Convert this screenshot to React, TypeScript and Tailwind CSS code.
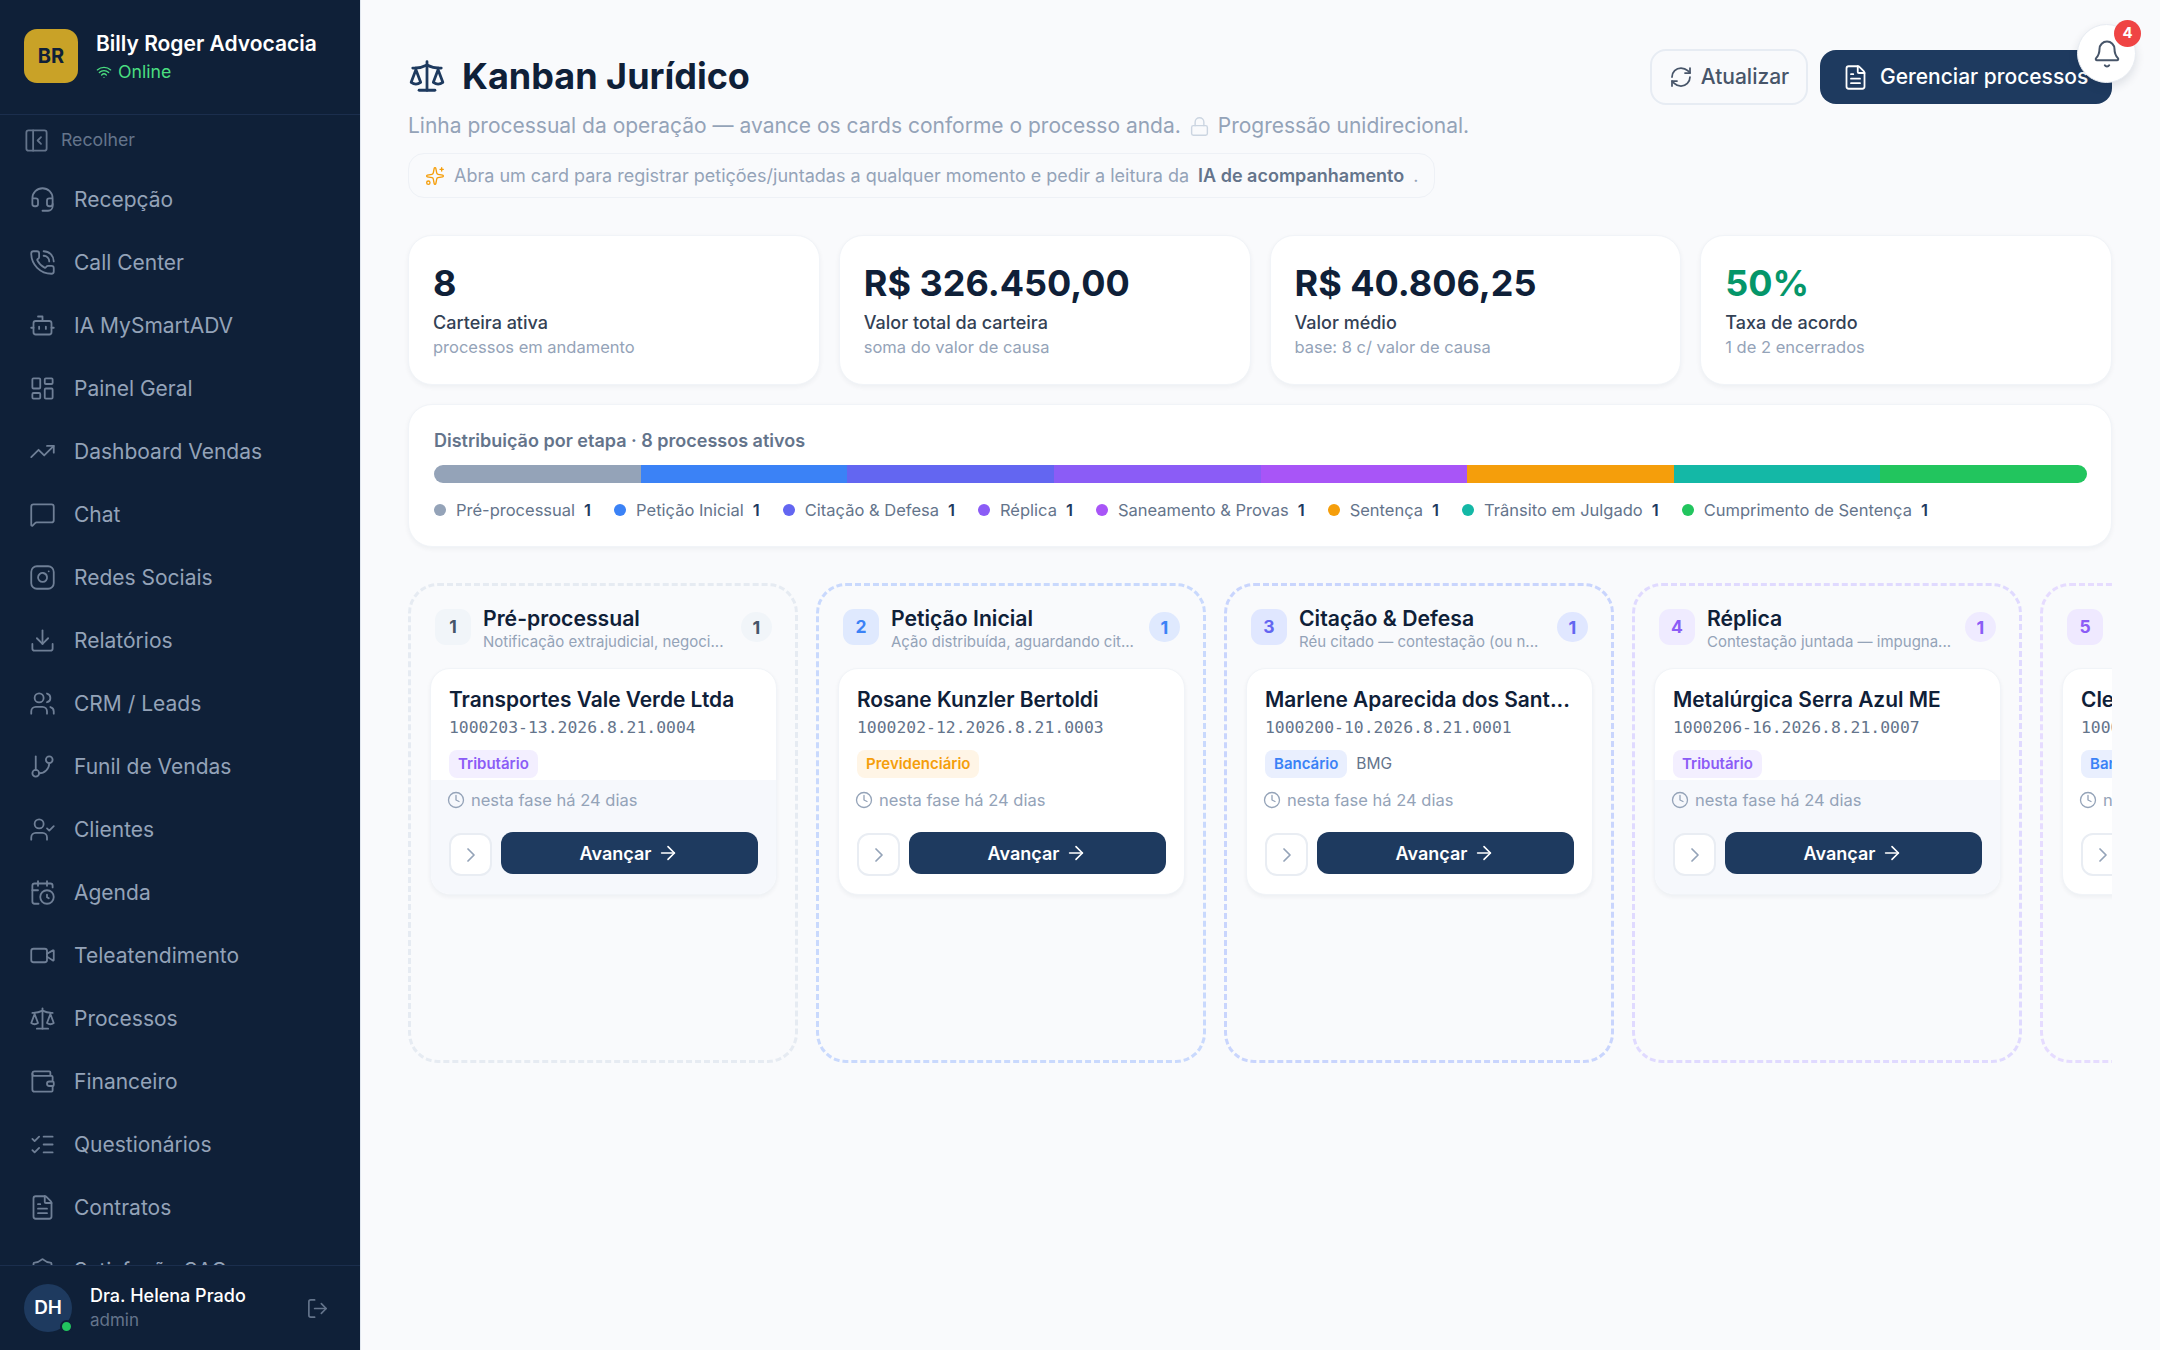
import {
  ArrowRight,
  Bell,
  Bot,
  CalendarClock,
  ChevronRight,
  Clock,
  Download,
  FileText,
  GitBranch,
  Headset,
  Instagram,
  LayoutDashboard,
  ListChecks,
  Lock,
  LogOut,
  MessageSquare,
  PanelLeftClose,
  PhoneCall,
  RefreshCw,
  Scale,
  ShieldCheck,
  Sparkles,
  TrendingUp,
  UserCheck,
  Users,
  Video,
  Wallet,
  Wifi,
} from "lucide-react";

const navItems = [
  { label: "Recepção", icon: Headset },
  { label: "Call Center", icon: PhoneCall },
  { label: "IA MySmartADV", icon: Bot },
  { label: "Painel Geral", icon: LayoutDashboard },
  { label: "Dashboard Vendas", icon: TrendingUp },
  { label: "Chat", icon: MessageSquare },
  { label: "Redes Sociais", icon: Instagram },
  { label: "Relatórios", icon: Download },
  { label: "CRM / Leads", icon: Users },
  { label: "Funil de Vendas", icon: GitBranch },
  { label: "Clientes", icon: UserCheck },
  { label: "Agenda", icon: CalendarClock },
  { label: "Teleatendimento", icon: Video },
  { label: "Processos", icon: Scale },
  { label: "Financeiro", icon: Wallet },
  { label: "Questionários", icon: ListChecks },
  { label: "Contratos", icon: FileText },
  { label: "Satisfação SAC", icon: ShieldCheck },
];

const stats = [
  { value: "8", label: "Carteira ativa", sub: "processos em andamento", color: "text-[#0f2038]" },
  { value: "R$ 326.450,00", label: "Valor total da carteira", sub: "soma do valor de causa", color: "text-[#0f2038]" },
  { value: "R$ 40.806,25", label: "Valor médio", sub: "base: 8 c/ valor de causa", color: "text-[#0f2038]" },
  { value: "50%", label: "Taxa de acordo", sub: "1 de 2 encerrados", color: "text-[#059669]" },
];

const stages = [
  { label: "Pré-processual", dot: "bg-[#94a3b8]" },
  { label: "Petição Inicial", dot: "bg-[#3b82f6]" },
  { label: "Citação & Defesa", dot: "bg-[#6366f1]" },
  { label: "Réplica", dot: "bg-[#8b5cf6]" },
  { label: "Saneamento & Provas", dot: "bg-[#a855f7]" },
  { label: "Sentença", dot: "bg-[#f59e0b]" },
  { label: "Trânsito em Julgado", dot: "bg-[#14b8a6]" },
  { label: "Cumprimento de Sentença", dot: "bg-[#22c55e]" },
];

const tagStyles = {
  tributario: "bg-[#f3efff] text-[#8b5cf6]",
  previdenciario: "bg-[#fff5e6] text-[#f59e0b]",
  bancario: "bg-[#e9effe] text-[#3b82f6]",
};

const columns = [
  {
    n: "1",
    title: "Pré-processual",
    desc: "Notificação extrajudicial, negoci...",
    border: "border-[#e6ebf2]",
    badge: "bg-[#f1f5f9] text-[#475569]",
    client: "Transportes Vale Verde Ltda",
    code: "1000203-13.2026.8.21.0004",
    tag: "Tributário",
    tagStyle: tagStyles.tributario,
    extra: "",
    shaded: true,
  },
  {
    n: "2",
    title: "Petição Inicial",
    desc: "Ação distribuída, aguardando cit...",
    border: "border-[#c9d9fd]",
    badge: "bg-[#dfe9fe] text-[#3b82f6]",
    client: "Rosane Kunzler Bertoldi",
    code: "1000202-12.2026.8.21.0003",
    tag: "Previdenciário",
    tagStyle: tagStyles.previdenciario,
    extra: "",
    shaded: false,
  },
  {
    n: "3",
    title: "Citação & Defesa",
    desc: "Réu citado — contestação (ou n...",
    border: "border-[#c9d5fd]",
    badge: "bg-[#e0e7ff] text-[#6366f1]",
    client: "Marlene Aparecida dos Sant...",
    code: "1000200-10.2026.8.21.0001",
    tag: "Bancário",
    tagStyle: tagStyles.bancario,
    extra: "BMG",
    shaded: false,
  },
  {
    n: "4",
    title: "Réplica",
    desc: "Contestação juntada — impugna...",
    border: "border-[#e0daff]",
    badge: "bg-[#efebff] text-[#8b5cf6]",
    client: "Metalúrgica Serra Azul ME",
    code: "1000206-16.2026.8.21.0007",
    tag: "Tributário",
    tagStyle: tagStyles.tributario,
    extra: "",
    shaded: true,
  },
  {
    n: "5",
    title: "Saneamento & Provas",
    desc: "Instrução e produção de provas...",
    border: "border-[#e6dcff]",
    badge: "bg-[#efe9ff] text-[#8b5cf6]",
    client: "Cleide Moreira Santos",
    code: "1000201-11.2026.8.21.0002",
    tag: "Bancário",
    tagStyle: tagStyles.bancario,
    extra: "",
    shaded: false,
  },
];

function Sidebar() {
  return (
    <aside className="flex h-[1350px] w-[361px] shrink-0 flex-col border-r border-[#e2e8f0] bg-[#0f2038]">
      <div className="flex h-[115px] shrink-0 items-center gap-[18px] border-b border-[#1b2e4d] pl-[24px]">
        <div className="mb-[2px] flex h-[54px] w-[54px] items-center justify-center rounded-[13px] bg-[#c9a227] text-[20px] font-bold text-[#0f2038]">
          BR
        </div>
        <div>
          <div className="text-[21px] leading-[30px] font-semibold text-white">Billy Roger Advocacia</div>
          <div className="flex items-center gap-[6px] text-[17.7px] leading-[26px] text-[#4ade80]">
            <Wifi size={16} />
            Online
          </div>
        </div>
      </div>
      <div className="flex h-[50px] shrink-0 items-center gap-[11px] pl-[23px] text-[17.7px] text-[#64748b]">
        <PanelLeftClose size={27} strokeWidth={1.6} />
        Recolher
      </div>
      <nav className="min-h-0 flex-1 overflow-hidden pt-[3px]">
        {navItems.map((item) => (
          <div
            key={item.label}
            className="flex h-[63px] items-center gap-[18px] pl-[29px] text-[21px] text-[#94a3b8]"
          >
            <item.icon size={27} strokeWidth={1.6} className="text-[#6f7f96]" />
            {item.label}
          </div>
        ))}
      </nav>
      <div className="flex h-[85px] shrink-0 items-center border-t border-[#1b2e4d] pl-[24px]">
        <div className="relative flex h-[48px] w-[48px] items-center justify-center rounded-full bg-[#1e3a5f] text-[18.9px] font-semibold text-white">
          DH
          <span className="absolute right-[-1px] bottom-[-1px] h-[13px] w-[13px] rounded-full border-[2px] border-[#0f2038] bg-[#22c55e]" />
        </div>
        <div className="ml-[18px] flex-1">
          <div className="text-[18px] leading-[24px] font-medium text-white">Dra. Helena Prado</div>
          <div className="text-[17px] leading-[24px] text-[#64748b]">admin</div>
        </div>
        <LogOut size={23} strokeWidth={1.75} className="mr-[31px] text-[#64748b]" />
      </div>
    </aside>
  );
}

function Header() {
  return (
    <div className="flex items-start justify-between">
      <div>
        <div className="flex h-[54px] items-center gap-[16px]">
          <Scale size={38} strokeWidth={1.75} className="text-[#1e3a5f]" />
          <h1 className="text-[36px] font-bold text-[#0f2038]">Kanban Jurídico</h1>
        </div>
        <div className="mt-[6px] flex h-[34px] items-center gap-[8px] text-[21px] text-[#94a3b8]">
          Linha processual da operação — avance os cards conforme o processo anda.
          <Lock size={21} strokeWidth={1.6} className="text-[#cbd5e1]" />
          Progressão unidirecional.
        </div>
        <div className="mt-[10px] flex h-[45px] w-[1027px] items-center rounded-[16px] border border-[#eef1f6] pl-[16px] text-[18px] whitespace-nowrap text-[#94a3b8]">
          <Sparkles size={20} strokeWidth={1.6} className="mr-[9px] text-[#f59e0b]" />
          Abra um card para registrar petições/juntadas a qualquer momento e pedir a leitura da
          <b className="mx-[9px] font-semibold text-[#64748b]">IA de acompanhamento</b>.
        </div>
      </div>
      <div className="flex items-center gap-[12px]">
        <button className="flex h-[56px] w-[158px] items-center justify-center gap-[8px] rounded-[16px] border-2 border-[#e7ecf3] text-[21px] font-medium text-[#475569]">
          <RefreshCw size={24} strokeWidth={1.75} />
          Atualizar
        </button>
        <button className="flex h-[54px] w-[292px] items-center gap-[11px] rounded-[16px] bg-[#1e3a5f] pl-[22px] text-[21px] font-medium whitespace-nowrap text-white">
          <FileText size={27} strokeWidth={1.6} />
          Gerenciar processos
        </button>
      </div>
    </div>
  );
}

function StatCard({ stat }: { stat: (typeof stats)[number] }) {
  return (
    <div className="h-[150px] rounded-[24px] border border-[#f1f4f8] bg-white pt-[23px] pl-[24px] shadow-[0_2px_5px_rgba(15,32,56,0.05)]">
      <div className={`text-[36px] leading-[48px] font-bold ${stat.color}`}>{stat.value}</div>
      <div className="mt-[2px] text-[18px] leading-[27px] font-medium text-[#334155]">{stat.label}</div>
      <div className="text-[16.5px] leading-[22px] text-[#94a3b8]">{stat.sub}</div>
    </div>
  );
}

function Distribution() {
  return (
    <div className="mt-[19px] h-[143px] rounded-[24px] border border-[#f1f4f8] bg-white pt-[22px] pr-[24px] pl-[25px] shadow-[0_2px_5px_rgba(15,32,56,0.05)]">
      <div className="text-[18px] leading-[27px] font-semibold text-[#64748b]">
        Distribuição por etapa · 8 processos ativos
      </div>
      <div className="mt-[11px] flex h-[18px] overflow-hidden rounded-full">
        {stages.map((s) => (
          <div key={s.label} className={`flex-1 ${s.dot}`} />
        ))}
      </div>
      <div className="mt-[15px] flex items-center gap-[23px]">
        {stages.map((s) => (
          <div key={s.label} className="flex items-center text-[16.5px] text-[#64748b]">
            <span className={`mr-[10px] h-[12px] w-[12px] rounded-full ${s.dot}`} />
            {s.label}
            <b className="ml-[9px] font-semibold text-[#1e3a5f]">1</b>
          </div>
        ))}
      </div>
    </div>
  );
}

function Column({ col }: { col: (typeof columns)[number] }) {
  return (
    <div className={`h-[480px] w-[390px] shrink-0 rounded-[30px] border-[3px] border-dashed pt-[23px] pr-[18px] pl-[19px] ${col.border}`}>
      <div className="flex h-[59px] items-start px-[5px]">
        <div className={`flex h-[36px] w-[36px] shrink-0 items-center justify-center rounded-[11px] text-[17.5px] font-bold ${col.badge}`}>
          {col.n}
        </div>
        <div className="ml-[12px] min-w-0 flex-1">
          <div className="mt-[-3px] text-[21.2px] leading-[24px] font-semibold whitespace-nowrap text-[#0f2038]">{col.title}</div>
          <div className="mt-[1px] text-[15px] leading-[22px] whitespace-nowrap text-[#94a3b8]">{col.desc}</div>
        </div>
        <div className={`mt-[3px] flex h-[30px] w-[31px] shrink-0 items-center justify-center rounded-full text-[18px] font-bold ${col.badge}`}>
          1
        </div>
      </div>
      <div className="overflow-hidden rounded-[20px] border border-[#f1f4f8] bg-white shadow-[0_2px_4px_rgba(15,32,56,0.05)]">
        <div className="h-[111px] px-[18px] pt-[17px]">
          <div className="text-[20.9px] leading-[28px] font-semibold whitespace-nowrap text-[#0f2038]">{col.client}</div>
          <div className="mt-[2px] font-['DejaVu_Sans_Mono',monospace] text-[16.4px] leading-[24px] whitespace-nowrap text-[#64748b]">
            {col.code}
          </div>
          <div className="mt-[10px] flex items-center gap-[9px]">
            <span className={`rounded-[8px] px-[9px] text-[15px] leading-[28px] font-semibold ${col.tagStyle}`}>{col.tag}</span>
            {col.extra && <span className="text-[15.5px] text-[#64748b]">{col.extra}</span>}
          </div>
        </div>
        <div className={`h-[114px] px-[18px] pt-[8px] ${col.shaded ? "bg-[#f6f8fc]" : ""}`}>
          <div className="ml-[-2px] flex h-[24px] items-center gap-[6px] text-[16.5px] text-[#94a3b8]">
            <Clock size={18} strokeWidth={1.75} />
            nesta fase há 24 dias
          </div>
          <div className="mt-[20px] flex items-start gap-[9px]">
            <button className="mt-[1px] flex h-[43px] w-[43px] shrink-0 items-center justify-center rounded-[12px] border-2 border-[#e9edf3] bg-white text-[#94a3b8]">
              <ChevronRight size={24} strokeWidth={1.75} />
            </button>
            <button className="flex h-[42px] flex-1 items-center justify-center gap-[6px] rounded-[12px] bg-[#1e3a5f] text-[18px] font-semibold text-white">
              Avançar
              <ArrowRight size={22} strokeWidth={1.75} />
            </button>
          </div>
        </div>
      </div>
    </div>
  );
}

export default function App() {
  return (
    <div className="relative flex h-[1350px] w-[2160px] overflow-hidden bg-[#f9fafc] font-['Inter',sans-serif]">
      <Sidebar />
      <main className="min-w-0 flex-1 pt-[49px] pr-[48px] pl-[47px]">
        <Header />
        <div className="mt-[37px] grid grid-cols-4 gap-[19px]">
          {stats.map((s) => (
            <StatCard key={s.label} stat={s} />
          ))}
        </div>
        <Distribution />
        <div className="mt-[36px] flex gap-[18px] overflow-hidden">
          {columns.map((c) => (
            <Column key={c.n} col={c} />
          ))}
        </div>
      </main>
      {/* sino flutuante por cima do botão */}
      <div className="absolute top-[24px] left-[2077px] flex h-[59px] w-[59px] items-center justify-center rounded-full border border-[#e8ecf2] bg-white text-[#475569] shadow-[0_4px_10px_rgba(15,32,56,0.12)]">
        <Bell size={30} strokeWidth={1.6} />
        <span className="absolute top-[-5px] right-[-6px] flex h-[27px] w-[27px] items-center justify-center rounded-full bg-[#ef4444] text-[15px] font-bold text-white">
          4
        </span>
      </div>
    </div>
  );
}
